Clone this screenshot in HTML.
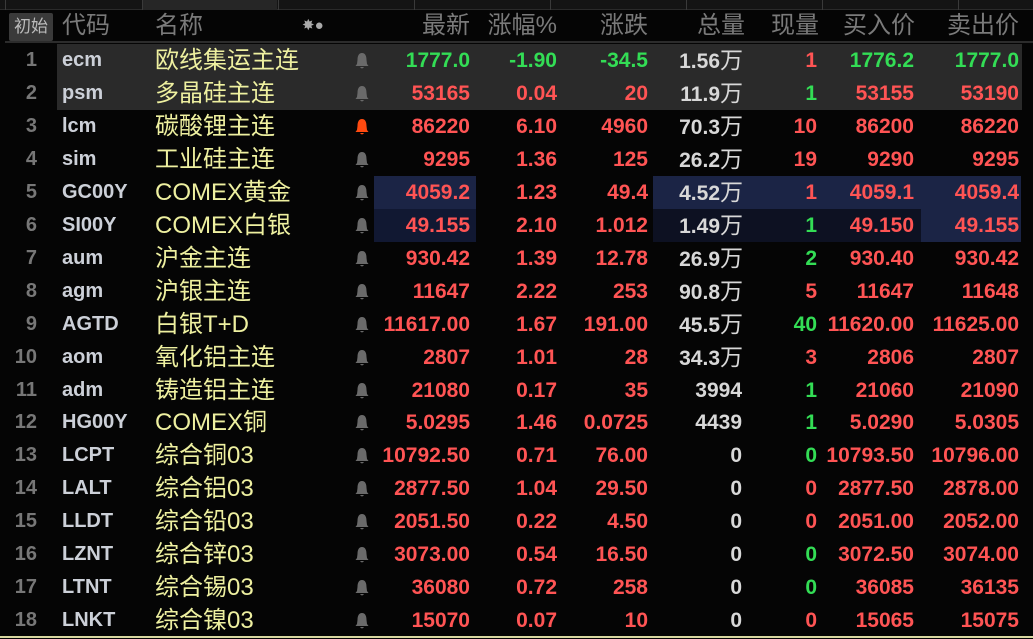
<!DOCTYPE html>
<html><head><meta charset="utf-8"><style>
*{margin:0;padding:0;box-sizing:border-box}
body{width:1033px;height:639px;background:#050505;overflow:hidden;position:relative;font-family:"Liberation Sans","Noto Sans CJK SC",sans-serif}
.tabs{position:absolute;left:0;top:0;width:1033px;height:10px;background:#141414;border-bottom:1px solid #2a2a2a}
.tab{position:absolute;top:0;height:10px;border-left:1px solid #3a3a3a}
.tab.act{background:#262626}
.hdr{position:absolute;top:10px;height:33px;left:5px;width:1028px;background:#050505;border-bottom:2px solid #2c2c2c}
.h{position:absolute;top:10px;font-size:24px;line-height:32px;color:#7a7a7a;white-space:nowrap}
.r{text-align:right}
.btn{position:absolute;left:9px;top:13px;width:44px;height:28px;background:#3a3a3a;color:#bbb;font-size:17px;line-height:28px;text-align:center;border-radius:2px}
.row{position:absolute;left:0;width:1033px;height:33px}
.c{position:absolute;top:0;height:33px;line-height:33px;font-size:21px;font-weight:bold;white-space:nowrap}
.n{color:#777;right:996px;text-align:right;font-size:20px}
.code{left:62px;color:#ccd0d8;font-size:20px}
.name{left:155px;color:#eef0a0;font-weight:normal;font-size:24px}
.bell{left:354px;top:8px;width:16px;height:18px}
.R{color:#ff5454}.G{color:#33dd55}.W{color:#d8d8d8}
.wan{font-weight:normal;font-size:23px}
</style></head><body>
<div class="tabs">
<div class="tab" style="left:5px;width:135px"></div>
<div class="tab act" style="left:142px;width:135px"></div>
<div class="tab" style="left:278px;width:136px"></div>
<div class="tab" style="left:414px;width:136px"></div>
<div class="tab" style="left:550px;width:136px"></div>
<div class="tab" style="left:686px;width:136px"></div>
<div class="tab" style="left:822px;width:136px"></div>
<div class="tab" style="left:958px;width:80px"></div>
</div>
<div class="hdr"></div>
<div class="btn">初始</div>
<div class="h" style="left:62px">代码</div>
<div class="h" style="left:155px">名称</div>
<div class="h" style="left:302px;font-size:15px;top:10px;color:#aaa">✸●</div>
<div class="h r" style="right:563px">最新</div>
<div class="h r" style="right:476px">涨幅%</div>
<div class="h r" style="right:385px">涨跌</div>
<div class="h r" style="right:288px">总量</div>
<div class="h r" style="right:214px">现量</div>
<div class="h r" style="right:118px">买入价</div>
<div class="h r" style="right:14px">卖出价</div>
<div style="position:absolute;left:57px;top:44px;width:965px;height:66px;background:#2a2a2a"></div>
<div style="position:absolute;left:374px;top:176px;width:102px;height:33px;background:#1b2445"></div>
<div style="position:absolute;left:653px;top:176px;width:368px;height:33px;background:#1b2445"></div>
<div style="position:absolute;left:374px;top:209px;width:102px;height:33px;background:#111832"></div>
<div style="position:absolute;left:653px;top:209px;width:268px;height:33px;background:#0d1122"></div>
<div style="position:absolute;left:921px;top:209px;width:100px;height:33px;background:#1b2445"></div>
<div style="position:absolute;left:0;top:636px;width:1033px;height:2px;background:#d8d8a0"></div>
<div id="rows"></div>
<script>
var d=[
["1","ecm","欧线集运主连","1777.0","-1.90","-34.5","1.56","万","1","1776.2","1777.0","G","R"],
["2","psm","多晶硅主连","53165","0.04","20","11.9","万","1","53155","53190","R","G"],
["3","lcm","碳酸锂主连","86220","6.10","4960","70.3","万","10","86200","86220","R","R"],
["4","sim","工业硅主连","9295","1.36","125","26.2","万","19","9290","9295","R","R"],
["5","GC00Y","COMEX黄金","4059.2","1.23","49.4","4.52","万","1","4059.1","4059.4","R","R"],
["6","SI00Y","COMEX白银","49.155","2.10","1.012","1.49","万","1","49.150","49.155","R","G"],
["7","aum","沪金主连","930.42","1.39","12.78","26.9","万","2","930.40","930.42","R","G"],
["8","agm","沪银主连","11647","2.22","253","90.8","万","5","11647","11648","R","R"],
["9","AGTD","白银T+D","11617.00","1.67","191.00","45.5","万","40","11620.00","11625.00","R","G"],
["10","aom","氧化铝主连","2807","1.01","28","34.3","万","3","2806","2807","R","R"],
["11","adm","铸造铝主连","21080","0.17","35","3994","","1","21060","21090","R","G"],
["12","HG00Y","COMEX铜","5.0295","1.46","0.0725","4439","","1","5.0290","5.0305","R","G"],
["13","LCPT","综合铜03","10792.50","0.71","76.00","0","","0","10793.50","10796.00","R","G"],
["14","LALT","综合铝03","2877.50","1.04","29.50","0","","0","2877.50","2878.00","R","R"],
["15","LLDT","综合铅03","2051.50","0.22","4.50","0","","0","2051.00","2052.00","R","R"],
["16","LZNT","综合锌03","3073.00","0.54","16.50","0","","0","3072.50","3074.00","R","G"],
["17","LTNT","综合锡03","36080","0.72","258","0","","0","36085","36135","R","G"],
["18","LNKT","综合镍03","15070","0.07","10","0","","0","15065","15075","R","R"]];
var h="";
d.forEach(function(r,i){
var y=44+i*32.95,c=r[11],v=r[12];
var bc=i==2?"#ff4a10":"#6a6a6a";
h+='<div class="row" style="top:'+y+'px">'+
'<div class="c n">'+r[0]+'</div><div class="c code">'+r[1]+'</div><div class="c name">'+r[2]+'</div>'+
'<svg class="c bell" viewBox="0 0 16 18"><path d="M8 1C4.5 1 3.5 4.5 3.5 8L3 12L1.5 14H14.5L13 12L12.5 8C12.5 4.5 11.5 1 8 1Z M6 15Q8 18 10 15Z" fill="'+bc+'"/></svg>'+
'<div class="c r '+c+'" style="right:563px">'+r[3]+'</div>'+
'<div class="c r '+c+'" style="right:476px">'+r[4]+'</div>'+
'<div class="c r '+c+'" style="right:385px">'+r[5]+'</div>'+
'<div class="c r W" style="right:'+(r[7]?290:291)+'px">'+r[6]+(r[7]?'<span class="wan">万</span>':'')+'</div>'+
'<div class="c r '+v+'" style="right:216px">'+r[8]+'</div>'+
'<div class="c r '+c+'" style="right:119px">'+r[9]+'</div>'+
'<div class="c r '+c+'" style="right:14px">'+r[10]+'</div></div>';
});
document.getElementById("rows").innerHTML=h;
</script>
</body></html>
